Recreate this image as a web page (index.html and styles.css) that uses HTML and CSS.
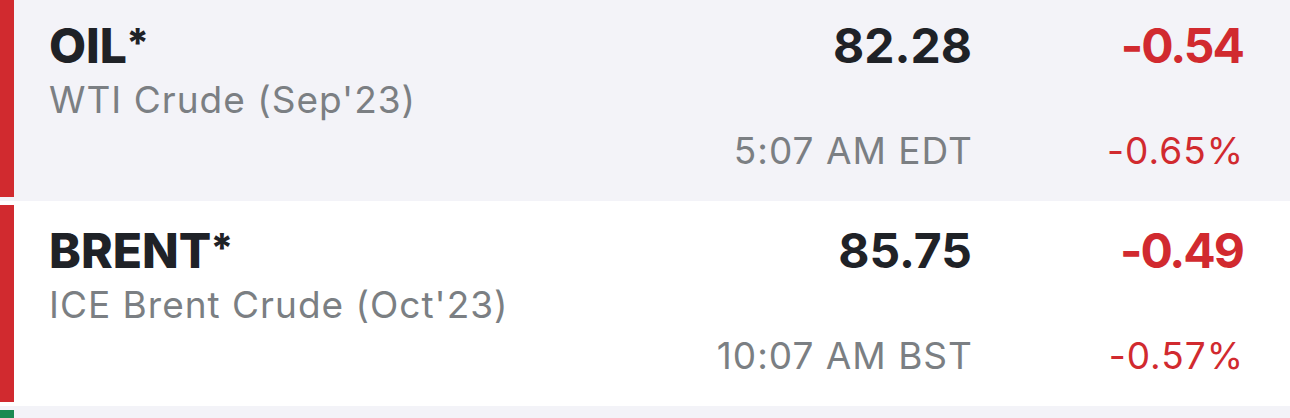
FILE: index.html
```html
<!DOCTYPE html>
<html lang="en">
<head>
<meta charset="utf-8">
<title>Markets</title>
<link rel="stylesheet" href="styles.css">
</head>
<body>
<div class="list">
  <div class="row row-alt">
    <div class="bar bar-down"></div>
    <div class="content">
      <div class="symbol">OIL<span class="star">*</span></div>
      <div class="price">82.28</div>
      <div class="change down">-0.54</div>
      <div class="desc">WTI Crude (Sep'23)</div>
      <div class="time">5:07 AM EDT</div>
      <div class="pct down">-0.65%</div>
    </div>
  </div>
  <div class="row">
    <div class="bar bar-down"></div>
    <div class="content">
      <div class="symbol">BRENT<span class="star">*</span></div>
      <div class="price">85.75</div>
      <div class="change down">-0.49</div>
      <div class="desc">ICE Brent Crude (Oct'23)</div>
      <div class="time">10:07 AM BST</div>
      <div class="pct down">-0.57%</div>
    </div>
  </div>
  <div class="row row-alt">
    <div class="bar bar-up"></div>
    <div class="content"></div>
  </div>
</div>
</body>
</html>
```

FILE: styles.css
```css
* { box-sizing: border-box; }
html, body { margin: 0; padding: 0; }
body {
  background: #ffffff;
  font-family: "Inter", "Lato", "Liberation Sans", sans-serif;
  overflow: hidden;
  height: 418px;
}
.list { margin-top: -4px; }
.row {
  display: flex;
  height: 205px;
  background: #ffffff;
}
.row-alt { background: #f3f3f8; }
.bar {
  width: 14px;
  margin: 4px 0;
  flex: none;
}
.bar-down { background: #d12a2f; }
.bar-up { background: #1a8a52; }
.content {
  flex: 1;
  display: grid;
  grid-template-columns: 1fr auto 271px;
  grid-template-rows: 61px 51px 56px;
  padding: 20px 47px 0 35px;
  align-items: baseline;
}
.symbol {
  font-size: 48px;
  font-weight: 800;
  color: #1f2227;
}
.star {
  font-size: 40px;
  vertical-align: 6px;
  line-height: 0;
  margin-left: -1px;
}
.price, .change {
  font-size: 48px;
  font-weight: 700;
  text-align: right;
  color: #1f2227;
}
.change { letter-spacing: -2px; }
.desc, .time, .pct {
  font-size: 37px;
  letter-spacing: 1px;
}
.desc {
  grid-column: 1 / 4;
  color: #7b7f83;
}
.time {
  grid-column: 2;
  color: #7b7f83;
  text-align: right;
  white-space: nowrap;
  margin-right: -1px;
}
.pct {
  text-align: right;
  margin-right: -1px;
}
.down { color: #d12a2f; }
```
